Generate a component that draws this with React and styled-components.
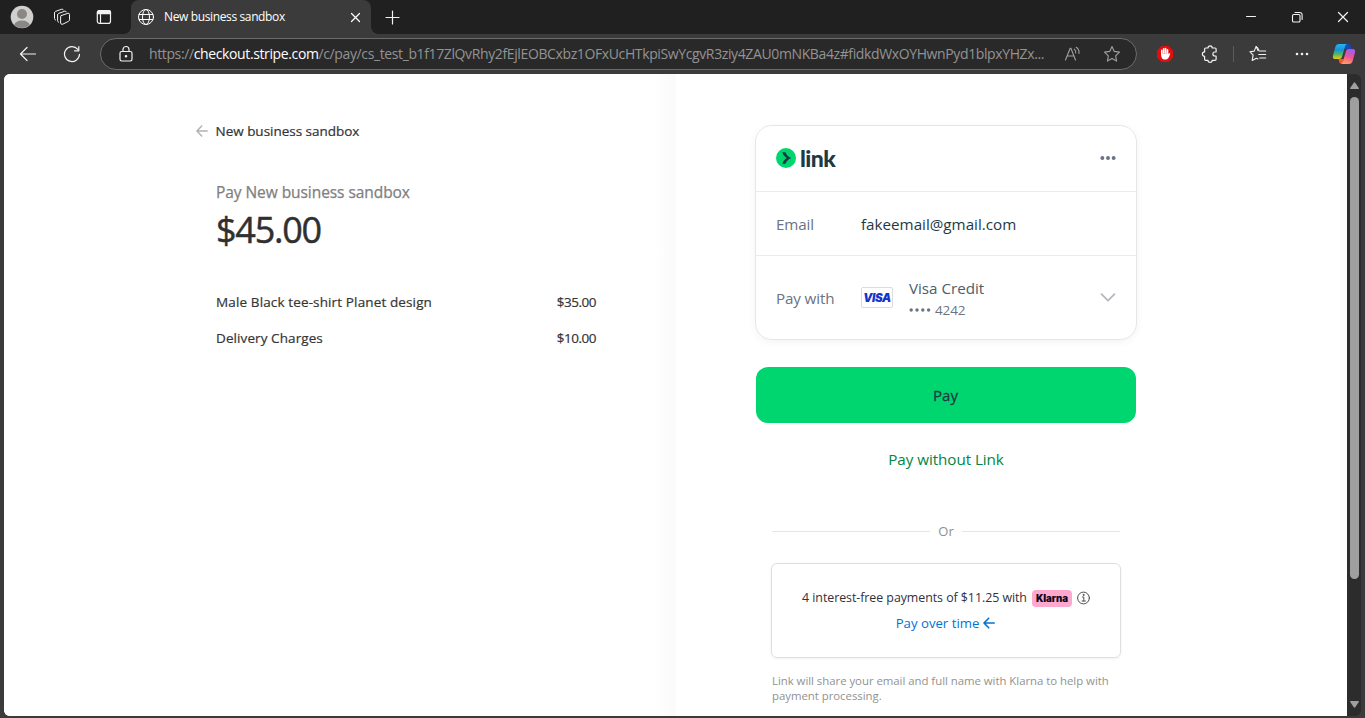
import React from "react";
import styled, { createGlobalStyle } from "styled-components";

const GlobalStyle = createGlobalStyle`
  * { box-sizing: border-box; }
  html, body { margin: 0; padding: 0; }
  body {
    width: 1365px;
    height: 718px;
    overflow: hidden;
    background: #3b3b3b;
    font-family: "Open Sans", "Noto Sans", sans-serif;
  }
  svg { display: block; }
`;

const Window = styled.div`
  width: 1365px;
  height: 718px;
  display: flex;
  flex-direction: column;
  background: #3b3b3b;
  overflow: hidden;
`;

/* ---------- browser chrome ---------- */

const TabStrip = styled.div`
  height: 34px;
  display: flex;
  align-items: center;
  background: #202020;
`;

const IconCell = styled.div`
  width: ${(p) => p.$w}px;
  height: 34px;
  flex: none;
  display: flex;
  align-items: center;
  justify-content: center;
  color: ${(p) => p.$color || "#f2f2f2"};
`;

const Tab = styled.div`
  position: relative;
  width: 240px;
  height: 34px;
  margin-left: 5px;
  padding: 0 9px 0 6px;
  display: flex;
  align-items: center;
  border-radius: 8px 8px 0 0;
  background: #3b3b3b;
  color: #ffffff;

  &::before,
  &::after {
    content: "";
    position: absolute;
    bottom: 0;
    width: 7px;
    height: 7px;
  }
  &::before {
    left: -7px;
    background: radial-gradient(circle at 0 0, transparent 6.5px, #3b3b3b 7px);
  }
  &::after {
    right: -7px;
    background: radial-gradient(circle at 100% 0, transparent 6.5px, #3b3b3b 7px);
  }
`;

const TabTitle = styled.span`
  flex: 1;
  margin-left: 9px;
  font-size: 12px;
  letter-spacing: -0.37px;
  line-height: 16px;
  white-space: nowrap;
`;

const Spacer = styled.div`
  flex: 1;
`;

const Toolbar = styled.div`
  height: 40px;
  padding-left: 6px;
  display: flex;
  align-items: center;
  background: #3b3b3b;
`;

const AddressBar = styled.div`
  width: 1037px;
  height: 32px;
  margin: 0 6px;
  padding: 0 4px 0 7px;
  display: flex;
  align-items: center;
  border: 1px solid #6b6b6b;
  border-radius: 16px;
  background: #292929;
`;

const Url = styled.span`
  flex: 1;
  margin-left: 5px;
  font-size: 14px;
  line-height: 20px;
  letter-spacing: -0.38px;
  white-space: nowrap;
  color: #939393;
`;

const Host = styled.span`
  color: #ffffff;
`;

const ToolDivider = styled.div`
  width: 1px;
  height: 16px;
  margin: 0 2px 0 1px;
  background: #5c5c5c;
`;

/* ---------- page frame ---------- */

const Viewport = styled.div`
  height: 642px;
  margin: 0 4px;
  display: flex;
`;

const Page = styled.div`
  width: 1343px;
  height: 642px;
  display: flex;
  overflow: hidden;
  border-radius: 6px 0 0 6px;
  background: #ffffff;
`;

const ScrollTrack = styled.div`
  width: 14px;
  height: 642px;
  padding: 8px 0;
  display: flex;
  flex-direction: column;
  align-items: center;
  border-radius: 0 6px 6px 0;
  background: #2c2c2c;
`;

const ScrollThumb = styled.div`
  width: 9px;
  height: 482px;
  margin-top: 8px;
  border-radius: 5px;
  background: #9f9f9f;
`;

/* ---------- order summary ---------- */

const Summary = styled.section`
  width: 672px;
  padding: 47px 80px 0 192px;
  background: linear-gradient(to right, #ffffff 97%, #fafafa 100%);
`;

const BackRow = styled.div`
  height: 20px;
  display: flex;
  align-items: center;
  color: #b3b3b3;
`;

const Merchant = styled.span`
  margin-left: 7.5px;
  font-size: 13.5px;
  letter-spacing: -0.02px;
  -webkit-text-stroke: 0.2px currentColor;
  color: #333333;
`;

const SummaryBody = styled.div`
  padding-left: 20px;
`;

const PayLabel = styled.div`
  margin-top: 39px;
  font-size: 15.5px;
  line-height: 24px;
  letter-spacing: -0.06px;
  -webkit-text-stroke: 0.25px currentColor;
  color: #808080;
`;

const Total = styled.div`
  margin-top: 1px;
  font-size: 36px;
  line-height: 50px;
  letter-spacing: -1.25px;
  -webkit-text-stroke: 0.45px currentColor;
  color: #303030;
`;

const Items = styled.div`
  margin-top: 37px;
  display: flex;
  flex-direction: column;
  gap: 16px;
`;

const Item = styled.div`
  height: 20px;
  display: flex;
  align-items: center;
  justify-content: space-between;
  font-size: 13.5px;
  -webkit-text-stroke: 0.2px currentColor;
  color: #353535;
`;

const ItemText = styled.span`
  letter-spacing: ${(p) => p.$ls}px;
`;

/* ---------- payment column ---------- */

const Payment = styled.section`
  width: 671px;
  padding: 51px 210px 0 79px;
`;

const Card = styled.div`
  width: 382px;
  height: 215px;
  border: 1px solid #e6e6e6;
  border-radius: 17px;
  box-shadow: 0 2px 8px rgba(0, 0, 0, 0.05);
`;

const CardRow = styled.div`
  height: ${(p) => p.$h}px;
  padding: 0 20px ${(p) => p.$lift || 0}px;
  display: flex;
  align-items: center;
  border-bottom: ${(p) => (p.$last ? "none" : "1px solid #ebebeb")};
`;

const LinkWord = styled.span`
  margin-left: 4px;
  font-family: Lato, sans-serif;
  font-size: 23px;
  font-weight: 900;
  line-height: 24px;
  letter-spacing: -0.5px;
  color: #1d3944;
`;

const FieldLabel = styled.span`
  width: 85px;
  font-size: 15.2px;
  letter-spacing: -0.13px;
  line-height: 22px;
  color: #6a7383;
`;

const FieldValue = styled.span`
  font-size: 15.2px;
  letter-spacing: 0;
  line-height: 22px;
  color: #1d3944;
`;

const VisaBadge = styled.div`
  width: 32px;
  height: 21px;
  padding-top: 1px;
  display: flex;
  align-items: center;
  justify-content: center;
  border: 1px solid #dcdcdc;
  border-radius: 2px;
  font-family: Inter, sans-serif;
  font-size: 11.5px;
  font-weight: 900;
  font-style: italic;
  letter-spacing: -0.4px;
  line-height: 19px;
  color: #1434cb;
`;

const CardInfo = styled.div`
  margin-left: 16px;
  flex: 1;
  display: flex;
  flex-direction: column;
`;

const CardName = styled.span`
  font-size: 15.2px;
  letter-spacing: -0.02px;
  line-height: 22px;
  color: #4a606a;
`;

const CardDigits = styled.span`
  display: flex;
  align-items: center;
  gap: 4px;
  height: 20px;
  padding-top: 2px;
  font-size: 13.5px;
  letter-spacing: -0.15px;
  color: #6a7383;
`;

const PayButton = styled.button`
  display: block;
  width: 380px;
  height: 56px;
  margin: 27px 0 0 1px;
  padding: 0 1px 0 0;
  border: 0;
  border-radius: 12px;
  background: #00d66f;
  font-family: inherit;
  font-size: 15px;
  -webkit-text-stroke: 0.3px currentColor;
  color: #1d3944;
`;

const WithoutLink = styled.div`
  margin-top: 24px;
  text-align: center;
  font-size: 15.2px;
  letter-spacing: -0.05px;
  line-height: 24px;
  color: #008545;
`;

const OrRow = styled.div`
  height: 20px;
  margin: 50px 17px 0;
  display: flex;
  align-items: center;
  gap: 8px;
  font-size: 13px;
  color: #8f8f8f;
`;

const Rule = styled.span`
  flex: 1;
  height: 1px;
  background: #e6e6e6;
`;

const KlarnaBox = styled.div`
  width: 350px;
  height: 95px;
  margin: 22px 0 0 16px;
  padding-top: 23px;
  border: 1px solid #dfdfdf;
  border-radius: 6px;
  box-shadow: 0 1px 3px rgba(0, 0, 0, 0.06);
`;

const KlarnaLine = styled.div`
  height: 20px;
  display: flex;
  align-items: center;
  justify-content: center;
  font-size: 12.4px;
  letter-spacing: -0.05px;
  white-space: nowrap;
  color: #30313d;
`;

const KlarnaBadge = styled.span`
  width: 40px;
  height: 17px;
  margin: 2px 5px 0 5px;
  display: flex;
  align-items: center;
  justify-content: center;
  border-radius: 4px;
  background: #ffa8cd;
  font-family: Inter, sans-serif;
  font-size: 9.7px;
  font-weight: 900;
  letter-spacing: -0.08px;
  color: #0b051d;
`;

const OverTime = styled.div`
  height: 20px;
  margin-top: 6px;
  padding-right: 1px;
  display: flex;
  align-items: center;
  justify-content: center;
  gap: 4px;
  font-size: 13.2px;
  letter-spacing: 0;
  color: #0074d4;
`;

const Disclosure = styled.p`
  width: 350px;
  margin: 15px 0 0 17px;
  font-size: 11.4px;
  line-height: 15px;
  letter-spacing: -0.03px;
  color: #929292;
`;

/* ---------- icons ---------- */

const Line = ({ w = 16, h = 16, sw = 1, box, children, ...rest }) => (
  <svg
    width={w}
    height={h}
    viewBox={box || `0 0 ${w} ${h}`}
    fill="none"
    stroke="currentColor"
    strokeWidth={sw}
    strokeLinecap="round"
    strokeLinejoin="round"
    {...rest}
  >
    {children}
  </svg>
);

const Avatar = () => (
  <svg width="24" height="24" viewBox="0 0 24 24">
    <defs>
      <clipPath id="avatarClip">
        <circle cx="12" cy="12" r="11" />
      </clipPath>
    </defs>
    <circle cx="12" cy="12" r="11.3" fill="#d2d0ce" />
    <circle cx="12" cy="9" r="5" fill="#8a8886" />
    <ellipse cx="12" cy="20.5" rx="7.8" ry="5" fill="#8a8886" clipPath="url(#avatarClip)" />
  </svg>
);

const Workspaces = () => (
  <Line w={18} h={18}>
    <path d="M8.2 7.6 14.8 5.3Q16.5 4.900 16.500 6.500V11.800Q16.500 12.900 15.500 13.300L9.800 16.200Q7.800 16.800 7.600 15V8.900Q7.600 8 8.200 7.600Z" />
    <path d="M5.500 14.200Q4.600 13.800 4.600 12.800V7Q4.600 5.900 5.600 5.400L11.800 3.200Q13 2.900 13.400 3.900" />
    <path d="M2.500 12Q1.500 11.600 1.500 10.500V5Q1.500 3.900 2.500 3.400L8.700 1.200Q9.900.900 10.400 1.900" />
  </Line>
);

const TabActions = () => (
  <Line w={16} h={16} sw={1.2}>
    <rect x="1.300" y="1.600" width="13.200" height="12.800" rx="2.200" />
    <path d="M1.500 3.200a1.600 1.600 0 0 1 1.600-1.600h9.800a1.600 1.600 0 0 1 1.600 1.600v1.500H1.500z" fill="currentColor" />
    <path d="M4.500 5.500v8.800" />
  </Line>
);

const Globe = () => (
  <Line w={18} h={18}>
    <circle cx="9" cy="9" r="7.500" />
    <ellipse cx="9" cy="9" rx="3.500" ry="7.500" />
    <path d="M2.200 6.500h13.600M2.200 11.500h13.600" />
  </Line>
);

const Lock = () => (
  <Line w={16} h={18} sw={1.200}>
    <rect x="2" y="6.500" width="12" height="9.500" rx="1.700" />
    <path d="M5 6.500V4.500a3 3 0 0 1 6 0v2" />
    <circle cx="8" cy="11.200" r=".700" fill="currentColor" />
  </Line>
);

const ReadAloud = () => (
  <Line w={18} h={18} sw={1.100}>
    <path d="M2.500 15 7.200 3.300h.700L12.500 15M4.200 11h6.700" />
    <path d="M11.300 4.200a4 4 0 0 1 1.400 3.700M13.200 2.300a6.500 6.500 0 0 1 2.800 6.200" />
  </Line>
);

const Star = () => (
  <Line w={18} h={18} sw={1.100}>
    <path d="m9 1.500 2.250 4.900 5.250.700-3.850 3.700.950 5.300L9 13.600l-4.600 2.500.950-5.300L1.500 7.100l5.250-.700z" />
  </Line>
);

const AdBlock = () => (
  <svg width="18" height="18" viewBox="0 0 18 18">
    <path d="M5.500 1h7L17 5.500v7L12.500 17h-7L1 12.500v-7z" fill="#e40d0d" />
    <g stroke="#fff" strokeWidth="1.600" strokeLinecap="round">
      <path d="M5.800 9.500V5.200M7.700 8V3.700M9.600 8V3.500M11.500 9V4.800" />
    </g>
    <path d="M5 8.500h7.300c.300.800 1.100-.600 2-.500-.600 3-1.900 6-4 6.400H7.700C5.600 13.800 5 11.500 5 8.500z" fill="#fff" />
  </svg>
);

const Puzzle = () => (
  <Line w={18} h={18} sw={1.200}>
    <path d="M4.600 3H7a2.100 2.100 0 0 1 4.200 0h2.900a1 1 0 0 1 1 1v3h-1.200a2 2 0 0 0 0 4h1.200v3.300a1 1 0 0 1-1 1h-2.900a2.100 2.100 0 0 1-4.200 0H4.600a1 1 0 0 1-1-1v-3a2.200 2.200 0 0 1 0-4.400V4a1 1 0 0 1 1-1z" />
  </Line>
);

const Favorites = () => (
  <Line w={18} h={18} sw={1.100}>
    <path d="M10 5.500 8.700 3 7.100 1.600 5.200 6.100.900 6.700l3.200 3.400-.900 5.300 4.200-2.200 1.500.800" />
    <path d="m7.100 1.600 2 4.200M10.700 6h6M9.700 9.500h7M10.700 13h6" />
  </Line>
);

const Dots = ({ r = 1.3, gap = 5, w = 16 }) => (
  <svg width={w} height="6" viewBox={`0 0 ${w} 6`} fill="currentColor">
    <circle cx={w / 2 - gap} cy="3" r={r} />
    <circle cx={w / 2} cy="3" r={r} />
    <circle cx={w / 2 + gap} cy="3" r={r} />
  </svg>
);

const Copilot = () => (
  <svg width="24" height="22" viewBox="0 0 24 22">
    <defs>
      <linearGradient id="cpLeft" x1="0" y1="0" x2="0" y2="1">
        <stop offset="0" stopColor="#22b4f5" />
        <stop offset=".4" stopColor="#1495d8" />
        <stop offset=".7" stopColor="#58b95a" />
        <stop offset="1" stopColor="#f4c70c" />
      </linearGradient>
      <linearGradient id="cpRight" x1=".6" y1="0" x2=".3" y2="1">
        <stop offset="0" stopColor="#a558ee" />
        <stop offset=".5" stopColor="#ee5596" />
        <stop offset="1" stopColor="#ffa05a" />
      </linearGradient>
    </defs>
    <path d="M12 1h4.500q1.500 0 2 1.700l1 3.300H13z" fill="#1747b8" />
    <path d="M11.500 16H6.500l.900 3.200Q8 21 10 21h2z" fill="#ef5a38" />
    <path d="M7 1h8q-1.400.300-1.900 2.200L10 14q-.600 2-2.700 2H3Q.300 16 1 12.500L3.300 4Q4.200 1 7 1z" fill="url(#cpLeft)" />
    <path d="M17 21H9q1.400-.300 1.900-2.200L14 8q.600-2 2.700-2H21q2.700 0 2 3.500L20.700 18Q19.800 21 17 21z" fill="url(#cpRight)" />
  </svg>
);

const LinkMark = () => (
  <svg width="20" height="20" viewBox="0 0 20 20">
    <circle cx="10" cy="10" r="10" fill="#00d66f" />
    <path d="M6.300 4.200h3.200c.800 2.500 2.900 4.600 5.800 5.800-2.900 1.200-5 3.300-5.800 5.800H6.300c.700-2.300 2.200-4.300 4.400-5.800-2.200-1.500-3.700-3.500-4.400-5.800z" fill="#1d3944" />
  </svg>
);

const ArrowUp = () => (
  <svg width="9" height="7" viewBox="0 0 9 7">
    <path d="M4.500.300q.500 0 .900.600L8.800 6q.300.900-.600 1H.800Q-.100 6.900.200 6L3.600.900Q4 .300 4.500.300z" fill="#9f9f9f" />
  </svg>
);

const ArrowDown = () => (
  <svg width="9" height="7" viewBox="0 0 9 7">
    <path d="M4.500 6.700q-.500 0-.900-.600L.200 1Q-.100.100.800 0h7.400q.900.100.600 1L5.400 6.100q-.400.600-.900.600z" fill="#9f9f9f" />
  </svg>
);

/* ---------- screen ---------- */

const items = [
  { name: "Male Black tee-shirt Planet design", price: "$35.00", ls: 0.13 },
  { name: "Delivery Charges", price: "$10.00", ls: 0.09 },
];

export default function App() {
  return (
    <Window>
      <GlobalStyle />
      <TabStrip>
        <IconCell $w={43}><Avatar /></IconCell>
        <IconCell $w={38}><Workspaces /></IconCell>
        <IconCell $w={45}><TabActions /></IconCell>
        <Tab>
          <Globe />
          <TabTitle>New business sandbox</TabTitle>
          <Line w={14} h={14} sw={1.2}><path d="M3.500 3.500l8 8M11.500 3.500l-8 8" /></Line>
        </Tab>
        <IconCell $w={43}>
          <Line w={15} h={15} sw={1.2}><path d="M7.500 1v13M1 7.500h13" /></Line>
        </IconCell>
        <Spacer />
        <IconCell $w={46}><Line w={12} h={12}><path d="M1.500 5.500h9" /></Line></IconCell>
        <IconCell $w={46}>
          <Line w={12} h={12} sw={1.1}>
            <rect x="1.500" y="3.500" width="7.500" height="7.500" rx="1.300" />
            <path d="M4 1.500h4.800a2.300 2.300 0 0 1 2.300 2.300V8.500" />
          </Line>
        </IconCell>
        <IconCell $w={45}><Line w={12} h={12} sw={1.2}><path d="M1.500 1.500l9 9M10.500 1.500l-9 9" /></Line></IconCell>
      </TabStrip>

      <Toolbar>
        <IconCell $w={44}>
          <Line w={18} h={18} sw={1.200}><path d="M16.500 9h-15M8 2.500 1.500 9 8 15.500" /></Line>
        </IconCell>
        <IconCell $w={44}>
          <Line w={18} h={18} sw={1.200}><path d="M16.500 9.300A7.500 7.500 0 1 1 14.800 4.300M15.800 1.500v4.300h-4.300" /></Line>
        </IconCell>
        <AddressBar>
          <IconCell $w={36}><Lock /></IconCell>
          <Url>
            https://<Host>checkout.stripe.com</Host>/c/pay/cs_test_b1f17ZlQvRhy2fEjlEOBCxbz1OFxUcHTkpiSwYcgvR3ziy4ZAU0mNKBa4z#fidkdWxOYHwnPyd1blpxYHZx...
          </Url>
          <IconCell $w={40} $color="#a0a0a0"><ReadAloud /></IconCell>
          <IconCell $w={40} $color="#a0a0a0"><Star /></IconCell>
        </AddressBar>
        <IconCell $w={44}><AdBlock /></IconCell>
        <IconCell $w={45}><Puzzle /></IconCell>
        <ToolDivider />
        <IconCell $w={44}><Favorites /></IconCell>
        <IconCell $w={44}><Dots /></IconCell>
        <IconCell $w={40}><Copilot /></IconCell>
      </Toolbar>

      <Viewport>
        <Page>
          <Summary>
            <BackRow>
              <Line w={12} h={12} sw={1.500}><path d="M11.200 6H1M5.700 1 .900 6l4.800 5" /></Line>
              <Merchant>New business sandbox</Merchant>
            </BackRow>
            <SummaryBody>
              <PayLabel>Pay New business sandbox</PayLabel>
              <Total>$45.00</Total>
              <Items>
                {items.map((it) => (
                  <Item key={it.name}>
                    <ItemText $ls={it.ls}>{it.name}</ItemText>
                    <ItemText $ls={-0.5}>{it.price}</ItemText>
                  </Item>
                ))}
              </Items>
            </SummaryBody>
          </Summary>

          <Payment>
            <Card>
              <CardRow $h={66} $lift={2}>
                <LinkMark />
                <LinkWord>link</LinkWord>
                <Spacer />
                <IconCell $w={16} $color="#6a7383"><Dots r={2.1} gap={6} w={17} /></IconCell>
              </CardRow>
              <CardRow $h={64}>
                <FieldLabel>Email</FieldLabel>
                <FieldValue>fakeemail@gmail.com</FieldValue>
              </CardRow>
              <CardRow $h={83} $last>
                <FieldLabel>Pay with</FieldLabel>
                <VisaBadge>VISA</VisaBadge>
                <CardInfo>
                  <CardName>Visa Credit</CardName>
                  <CardDigits>
                    <svg width="22" height="4" viewBox="0 0 22 4" fill="currentColor">
                      <circle cx="2.200" cy="2" r="1.700" />
                      <circle cx="8" cy="2" r="1.700" />
                      <circle cx="13.800" cy="2" r="1.700" />
                      <circle cx="19.600" cy="2" r="1.700" />
                    </svg>
                    4242
                  </CardDigits>
                </CardInfo>
                <IconCell $w={16} $color="#b3b8c2">
                  <Line w={16} h={10} sw={1.800}><path d="M1.500 1.200 8 7.700l6.500-6.500" /></Line>
                </IconCell>
              </CardRow>
            </Card>
            <PayButton>Pay</PayButton>
            <WithoutLink>Pay without Link</WithoutLink>
            <OrRow><Rule />Or<Rule /></OrRow>
            <KlarnaBox>
              <KlarnaLine>
                4 interest-free payments of $11.25 with
                <KlarnaBadge>Klarna</KlarnaBadge>
                <Line w={13} h={15} box="0 -1 13 15" color="#505050">
                  <circle cx="6.500" cy="7" r="5.900" />
                  <path d="M5.300 6h1.500v4M5 10h3.400" />
                  <circle cx="6.500" cy="3.900" r=".5" fill="currentColor" />
                </Line>
              </KlarnaLine>
              <OverTime>
                Pay over time
                <Line w={12} h={12} sw={1.600}><path d="M11.200 6H1.200M5.700 1.200 1 6l4.700 4.800" /></Line>
              </OverTime>
            </KlarnaBox>
            <Disclosure>
              Link will share your email and full name with Klarna to help with
              payment processing.
            </Disclosure>
          </Payment>
        </Page>
        <ScrollTrack>
          <ArrowUp />
          <ScrollThumb />
          <Spacer />
          <ArrowDown />
        </ScrollTrack>
      </Viewport>
    </Window>
  );
}
